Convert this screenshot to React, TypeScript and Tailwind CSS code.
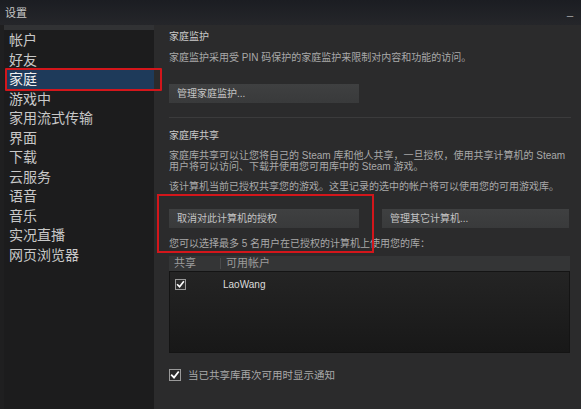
import React from 'react';

const font = "font-['Liberation_Sans','Noto_Sans_CJK_SC',sans-serif]";

const navItems = ['帐户', '好友', '家庭', '游戏中', '家用流式传输', '界面', '下载', '云服务', '语音', '音乐', '实况直播', '网页浏览器'];

function Check({ size }: { size: number }) {
  return (
    <div
      className="flex items-center justify-center border border-[#9a9a9a] bg-[#2b2b2b]"
      style={{ width: size, height: size }}
    >
      <svg viewBox="0 0 12 12" className="w-full h-full">
        <path d="M2.2 6.4 L4.8 9 L9.8 2.6" fill="none" stroke="#ffffff" strokeWidth="2.2" strokeLinecap="square" />
      </svg>
    </div>
  );
}

function SteamButton({ label, width }: { label: string; width: string }) {
  return (
    <div className={`${width} h-[19px] bg-gradient-to-b from-[#3f4041] to-[#393a3b] flex items-center pl-[8px] text-[10px] text-[#c4c4c4]`}>
      {label}
    </div>
  );
}

export default function App() {
  return (
    <div className={`w-[581px] h-[409px] flex flex-col bg-[#2b2b2c] overflow-hidden ${font}`}>
      {/* title bar */}
      <div className="h-[25px] shrink-0 flex items-center justify-between pl-[5px] pr-[8px] bg-gradient-to-b from-[#1b1d22] to-[#25262a]">
        <span className="text-[11px] leading-[14px] text-[#c6c6c6]">设置</span>
        <span className="text-[11px] leading-[14px] text-[#b0b0b0] -mt-[4px]">_</span>
      </div>

      <div className="flex-1 flex bg-[#1f1f20]">
        {/* sidebar */}
        <div className="relative z-10 ml-[4px] w-[150px] border-t-[5px] border-[#313234] bg-[#1c1c1d] pt-[1px]">
          {navItems.map((item) => (
            <div
              key={item}
              className={`h-[19.5px] leading-[19.5px] text-[14px] ${
                item === '家庭' ? 'ml-[2px] bg-[#1e3a5a] text-[#f0f0f0] pl-[3px]' : 'pl-[5px] text-[#c8c8c8]'
              }`}
            >
              {item}
            </div>
          ))}
          <div className="absolute left-[1px] top-[38px] w-[157px] h-[23px] border-2 border-[#d3161b] rounded-[1px]" />
        </div>

        {/* main */}
        <div className="relative flex-1 bg-[#2b2b2c] pl-[15px] pr-[10px] pt-[5px] text-[10px] text-[#a9a9a9]">
          <div className="leading-[14px] text-[#cacaca]">家庭监护</div>
          <div className="mt-[7px] leading-[14px]">家庭监护采用受 PIN 码保护的家庭监护来限制对内容和功能的访问。</div>
          <div className="mt-[19px]">
            <SteamButton label="管理家庭监护..." width="w-[190px]" />
          </div>
          <div className="mt-[14px] h-px w-[402px] bg-[#3b3b3c]" />

          <div className="mt-[11px] leading-[14px] text-[#cacaca]">家庭库共享</div>
          <div className="mt-[7px] leading-[11px] whitespace-nowrap">
            家庭库共享可以让您将自己的 Steam 库和他人共享，一旦授权，使用共享计算机的 Steam
            <br />
            用户将可以访问、下载并使用您可用库中的 Steam 游戏。
          </div>
          <div className="mt-[8px] leading-[14px] whitespace-nowrap">该计算机当前已授权共享您的游戏。这里记录的选中的帐户将可以使用您的可用游戏库。</div>
          <div className="mt-[15px] flex gap-[23px]">
            <SteamButton label="取消对此计算机的授权" width="w-[190px]" />
            <SteamButton label="管理其它计算机..." width="w-[187px]" />
          </div>
          <div className="mt-[9px] leading-[14px] whitespace-nowrap">您可以选择最多 5 名用户在已授权的计算机上使用您的库：</div>

          {/* table */}
          <div className="mt-[5px] w-[401px]">
            <div className="h-[15px] flex items-center bg-[#343536] text-[11px] text-[#9c9c9c]">
              <span className="w-[51px] pl-[5px]">共享</span>
              <span className="h-[11px] w-px bg-[#4a4a4b]" />
              <span className="pl-[5px]">可用帐户</span>
            </div>
            <div className="h-[82px] border border-[#141414] bg-gradient-to-b from-[#242424] to-[#181818]">
              <div className="flex items-center pt-[5px]">
                <div className="w-[53px] pl-[5px]">
                  <Check size={11} />
                </div>
                <span className="text-[10px] text-[#dcdcdc]">LaoWang</span>
              </div>
            </div>
          </div>

          <div className="mt-[15px] flex items-center gap-[7px]">
            <Check size={12} />
            <span className="leading-[14px] text-[10.5px] text-[#a9a9a9]">当已共享库再次可用时显示通知</span>
          </div>

          <div className="absolute left-[3px] top-[169px] w-[217px] h-[59px] border-2 border-[#d3161b]" />
        </div>
      </div>
    </div>
  );
}
